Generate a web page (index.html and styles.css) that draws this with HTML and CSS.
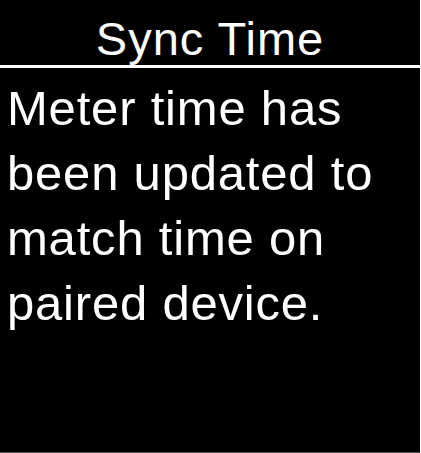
FILE: index.html
```html
<!DOCTYPE html>
<html lang="en">
<head>
  <meta charset="UTF-8">
  <title>Sync Time</title>
  <link rel="stylesheet" href="styles.css">
</head>
<body>
  <div class="screen">
    <h1 class="title">Sync Time</h1>
    <p class="message">Meter time has<br>been updated to<br>match time on<br>paired device.</p>
  </div>
</body>
</html>
```

FILE: styles.css
```css
html, body {
  margin: 0;
  padding: 0;
  background: #fff;
}

.screen {
  width: 420px;
  height: 452px;
  background: #000;
  color: #fff;
  font-family: "Liberation Sans", Arial, sans-serif;
  overflow: hidden;
  border-bottom: 1px solid #555;
}

.title {
  margin: 0;
  padding-top: 12px;
  font-size: 47px;
  font-weight: normal;
  line-height: 53px;
  letter-spacing: 1px;
  text-align: center;
  border-bottom: 3px solid #fff;
}

.message {
  margin: 0;
  padding: 8px 0 0 7px;
  font-size: 49px;
  line-height: 65px;
  letter-spacing: 0.8px;
}
```
